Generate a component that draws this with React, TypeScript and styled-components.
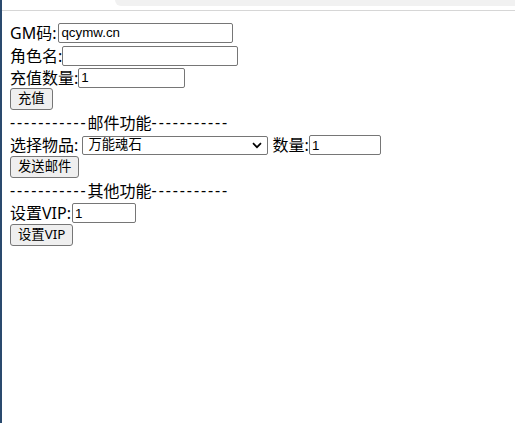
import React from "react";
import styled, { createGlobalStyle } from "styled-components";

const GlobalStyle = createGlobalStyle`
  html, body {
    margin: 0;
    padding: 0;
    background: #ffffff;
  }
  body {
    font-family: "Noto Sans", "Noto Sans CJK SC", "Liberation Sans", sans-serif;
    font-size: 16px;
    color: #000;
  }
`;

const Frame = styled.div`
  width: 515px;
  height: 423px;
  border-left: 2px solid #2a4a6e;
  box-sizing: border-box;
  overflow: hidden;
`;

const TopStrip = styled.div`
  height: 10px;
  display: flex;
  justify-content: flex-end;
  border-bottom: 1px solid #d6d6d6;
`;

const Tab = styled.div`
  width: 400px;
  height: 6px;
  background: #f1f1f1;
  border-bottom-left-radius: 6px;
`;

const Page = styled.div`
  padding: 10px 8px 0 8px;
  display: flex;
  flex-direction: column;
`;

const Row = styled.div<{ $h: number }>`
  height: ${(p) => p.$h}px;
  display: flex;
  align-items: center;
  white-space: pre;
  line-height: 1;
`;

const Label = styled.span<{ $gap?: number }>`
  font-size: 16px;
  margin-right: ${(p) => p.$gap ?? 0}px;
`;

const TextInput = styled.input<{ $w: number }>`
  box-sizing: border-box;
  width: ${(p) => p.$w}px;
  height: 20px;
  margin: 0;
  padding: 1px 2px;
  border: 1px solid #767676;
  border-radius: 2px;
  font-family: "Liberation Sans", Arial, sans-serif;
  font-size: 13.33px;
  color: #000;
  background: #fff;
  outline: none;
`;

const Button = styled.button`
  box-sizing: border-box;
  height: 22px;
  margin: 0;
  padding: 0 7px;
  border: 1px solid #767676;
  border-radius: 3px;
  background: #efefef;
  font-family: "Noto Sans", "Noto Sans CJK SC", "Liberation Sans", sans-serif;
  font-size: 13.33px;
  color: #000;
  line-height: 1;
`;

const Divider = styled.div`
  height: 24px;
  display: flex;
  align-items: center;
  white-space: pre;
  font-size: 16px;
`;

const Dashes = styled.span`
  letter-spacing: 1.9px;
`;

const SelectBox = styled.div`
  position: relative;
  box-sizing: border-box;
  width: 186px;
  height: 19px;
  border: 1px solid #767676;
  border-radius: 2px;
  display: flex;
  align-items: center;
  padding-left: 5px;
  font-size: 13.33px;
  background: #fff;
`;

const Chevron = styled.svg`
  position: absolute;
  right: 5px;
  top: 5px;
`;

const Select: React.FC<{ value: string }> = ({ value }) => (
  <SelectBox>
    {value}
    <Chevron width="10" height="7" viewBox="0 0 10 7">
      <path d="M1 1.2 L5 5.2 L9 1.2" fill="none" stroke="#000" strokeWidth="1.7" />
    </Chevron>
  </SelectBox>
);

const Section: React.FC<{ title: string }> = ({ title }) => (
  <Divider>
    <Dashes>-----------</Dashes>
    {title}
    <Dashes>-----------</Dashes>
  </Divider>
);

export default function App() {
  return (
    <>
      <GlobalStyle />
      <Frame>
        <TopStrip>
          <Tab />
        </TopStrip>
        <Page>
          <Row $h={23}>
            <Label $gap={2}>GM码:</Label>
            <TextInput $w={175} defaultValue="qcymw.cn" />
          </Row>
          <Row $h={23}>
            <Label>角色名:</Label>
            <TextInput $w={176} defaultValue="" />
          </Row>
          <Row $h={21}>
            <Label>充值数量:</Label>
            <TextInput $w={107} defaultValue="1" />
          </Row>
          <Row $h={22}>
            <Button>充值</Button>
          </Row>
          <Section title="邮件功能" />
          <Row $h={22}>
            <Label>选择物品: </Label>
            <Select value="万能魂石" />
            <Label> 数量:</Label>
            <TextInput $w={72} defaultValue="1" />
          </Row>
          <Row $h={22}>
            <Button>发送邮件</Button>
          </Row>
          <Section title="其他功能" />
          <Row $h={22}>
            <Label $gap={1}>设置VIP:</Label>
            <TextInput $w={64} defaultValue="1" />
          </Row>
          <Row $h={22}>
            <Button>设置VIP</Button>
          </Row>
        </Page>
      </Frame>
    </>
  );
}
